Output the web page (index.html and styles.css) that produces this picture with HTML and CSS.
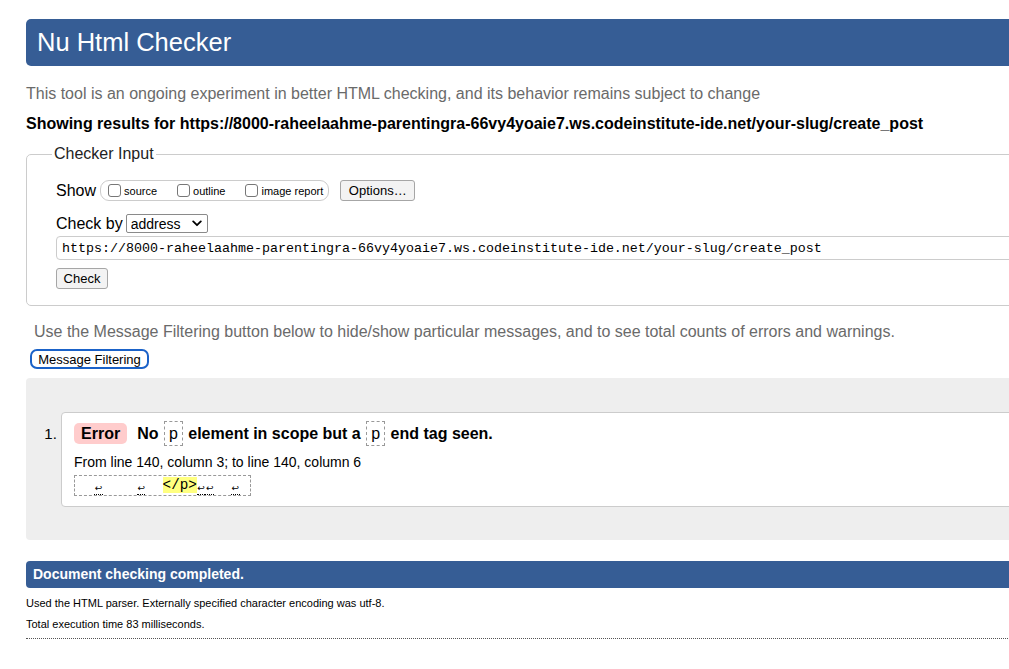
FILE: index.html
```html
<!DOCTYPE html>
<html lang="en">
<head>
<meta charset="utf-8">
<title>Nu Html Checker</title>
<link rel="stylesheet" href="styles.css">
</head>
<body>
<div class="page">
  <h1 class="title">Nu Html Checker</h1>
  <p class="intro">This tool is an ongoing experiment in better HTML checking, and its behavior remains subject to change</p>
  <p class="showing">Showing results for https://8000-raheelaahme-parentingra-66vy4yoaie7.ws.codeinstitute-ide.net/your-slug/create_post</p>

  <form class="checker-form">
    <fieldset class="checker">
      <legend class="legend">Checker Input</legend>
      <div class="row show-row">
        <span class="lbl">Show</span>
        <span class="opts">
          <label class="opt"><input type="checkbox" class="cb">source</label>
          <label class="opt"><input type="checkbox" class="cb">outline</label>
          <label class="opt last"><input type="checkbox" class="cb">image report</label>
        </span>
        <button type="button" class="btn options">Options…</button>
      </div>
      <div class="row check-row">
        <span class="lbl">Check by</span>
        <span class="select-wrap">
          <select class="sel"><option>address</option></select>
          <svg class="chev" width="10" height="7" viewBox="0 0 10 7"><path d="M1.2 1.4 L5 5.2 L8.8 1.4" fill="none" stroke="#000" stroke-width="1.8" stroke-linecap="round" stroke-linejoin="round"/></svg>
        </span>
      </div>
      <input class="url" type="text" value="https://8000-raheelaahme-parentingra-66vy4yoaie7.ws.codeinstitute-ide.net/your-slug/create_post">
      <button type="button" class="btn check">Check</button>
    </fieldset>
  </form>

  <p class="filter-note">Use the Message Filtering button below to hide/show particular messages, and to see total counts of errors and warnings.</p>
  <button type="button" class="filter-btn">Message Filtering</button>

  <div class="results">
    <ol class="messages">
      <li class="msg">
        <p class="msg-head"><strong class="badge">Error</strong><span class="msg-text">No <code class="tag">p</code> element in scope but a <code class="tag">p</code> end tag seen.</span></p>
        <p class="location">From line 140, column 3; to line 140, column 6</p>
        <p class="extract-line"><code class="extract">  <b class="lf">↩</b>    <b class="lf">↩</b>  <mark class="hl">&lt;/p&gt;</mark><b class="lf">↩</b><b class="lf">↩</b>  <b class="lf">↩</b> </code></p>
      </li>
    </ol>
  </div>

  <h2 class="done">Document checking completed.</h2>
  <p class="meta first">Used the HTML parser. Externally specified character encoding was utf-8.</p>
  <p class="meta">Total execution time 83 milliseconds.</p>
  <hr class="dotted">
</div>
</body>
</html>
```

FILE: styles.css
```css
html, body {
  overflow: hidden;
}
body {
  margin: 0;
  padding: 19px 0 0 26px;
  font-family: "Liberation Sans", Arial, sans-serif;
  color: #000;
  background: #fff;
}
.page {
  width: 1080px;
}
.title {
  margin: 0;
  height: 47px;
  line-height: 47px;
  padding: 0 11px;
  background: #365d95;
  color: #fff;
  font-size: 25.5px;
  font-weight: normal;
  border-radius: 5px;
}
.intro {
  margin: 18px 0 0;
  line-height: 20px;
  font-size: 16px;
  color: #6a6a6a;
}
.showing {
  margin: 10px 0 0;
  line-height: 20px;
  font-size: 16px;
  font-weight: bold;
}
.checker-form {
  margin: 10px 0 0;
}
.checker {
  margin: 0;
  padding: 16px 0 16px 29px;
  border: 1px solid #ccc;
  border-radius: 5px;
  min-width: 0;
}
.legend {
  font-size: 16px;
  line-height: 20px;
  padding: 0 2px;
  margin-left: -4px;
  color: #222;
}
.row {
  display: flex;
  align-items: center;
  font-size: 16px;
}
.show-row {
  height: 21px;
}
.lbl {
  line-height: 20px;
}
.opts {
  display: inline-flex;
  align-items: center;
  height: 19px;
  margin-left: 4px;
  padding: 0 5px 0 6px;
  border: 1px solid #ccc;
  border-radius: 9px;
  font-size: 11px;
}
.opt {
  display: inline-flex;
  align-items: center;
  margin-right: 19px;
}
.opt.last {
  margin-right: 0;
}
.cb {
  width: 13px;
  height: 13px;
  margin: 0 3px 0 1px;
  appearance: none;
  border: 1px solid #777;
  border-radius: 3px;
  background: #fff;
}
.btn {
  font-family: "Liberation Sans", Arial, sans-serif;
  font-size: 13px;
  color: #000;
  background: #f3f3f3;
  border: 1px solid #a6a6a6;
  border-radius: 3px;
  height: 21px;
  padding: 0 7px;
}
.options {
  margin-left: 11px;
  width: 75px;
}
.check-row {
  margin-top: 12px;
  height: 21px;
}
.select-wrap {
  position: relative;
  display: inline-flex;
  margin-left: 3px;
}
.sel {
  appearance: none;
  width: 82px;
  height: 19px;
  padding: 0 0 0 4px;
  font-family: "Liberation Sans", Arial, sans-serif;
  font-size: 14px;
  color: #000;
  background: #fff;
  border: 1px solid #8a8a8a;
  border-radius: 2px;
}
.chev {
  position: absolute;
  right: 6px;
  top: 6px;
  pointer-events: none;
}
.url {
  display: block;
  box-sizing: border-box;
  width: 100%;
  height: 24px;
  margin: 2px 0 0;
  padding: 0 5px;
  border: 1px solid #ccc;
  border-radius: 4px;
  font-family: "Liberation Mono", "DejaVu Sans Mono", monospace;
  font-size: 13.33px;
  color: #000;
}
.check {
  display: block;
  margin-top: 8px;
  width: 52px;
  padding: 0;
}
.filter-note {
  margin: 16px 0 0;
  padding-left: 8px;
  line-height: 20px;
  font-size: 16px;
  color: #6a6a6a;
}
.filter-btn {
  display: block;
  margin: 7px 0 0 4px;
  height: 20px;
  width: 119px;
  padding: 0;
  font-family: "Liberation Sans", Arial, sans-serif;
  font-size: 13px;
  color: #000;
  background: #fff;
  border: 2px solid #1a62c8;
  border-radius: 7px;
}
.results {
  margin-top: 9px;
  background: #eee;
  border-radius: 4px;
  padding: 34px 0 33px 35px;
}
.messages {
  margin: 0;
  padding: 0;
  font-size: 14px;
}
.msg {
  background: #fff;
  border: 1px solid #ccc;
  border-radius: 4px;
  padding: 8px 0 10px 12px;
}
.msg::marker {
  font-size: 15px;
}
.msg-head {
  margin: 0;
  display: flex;
  align-items: center;
  height: 25px;
  font-size: 16px;
  font-weight: bold;
}
.badge {
  display: inline-block;
  height: 21px;
  line-height: 21px;
  padding: 0 7px;
  background: #fcc;
  border-radius: 5px;
  margin-right: 10px;
}
.msg-text {
  line-height: 25px;
}
.tag {
  display: inline-block;
  font-family: "Liberation Sans", Arial, sans-serif;
  font-weight: normal;
  font-size: 16px;
  line-height: 23px;
  padding: 0 4px;
  border: 1px dashed #999;
  margin: 0 1px;
  vertical-align: top;
}
.location {
  margin: 8px 0 0;
  line-height: 16px;
  font-size: 14px;
}
.extract-line {
  margin: 5px 0 0;
  line-height: 19px;
}
.extract {
  display: inline-block;
  white-space: pre;
  font-family: "Liberation Mono", "DejaVu Sans Mono", monospace;
  font-size: 14.27px;
  line-height: 19px;
  padding: 0 2px;
  border: 1px dashed #999;
}
.lf {
  display: inline-block;
  width: 8.56px;
  text-align: center;
  font-family: "DejaVu Sans", sans-serif;
  font-weight: normal;
  font-size: 9px;
  line-height: 12px;
  border-bottom: 1px dotted #000;
  vertical-align: -2px;
}
.hl {
  background: #ffff80;
  color: #000;
}
.done {
  margin: 21px 0 0;
  height: 27px;
  line-height: 27px;
  padding: 0 7px;
  background: #365d95;
  color: #fff;
  font-size: 14px;
  font-weight: bold;
  border-radius: 4px;
}
.meta {
  margin: 7px 0 0;
  line-height: 14px;
  font-size: 11px;
}
.meta.first {
  margin-top: 8px;
}
.dotted {
  margin: 7px 0 0;
  border: 0;
  border-top: 1px dotted #555;
  height: 0;
}
```
